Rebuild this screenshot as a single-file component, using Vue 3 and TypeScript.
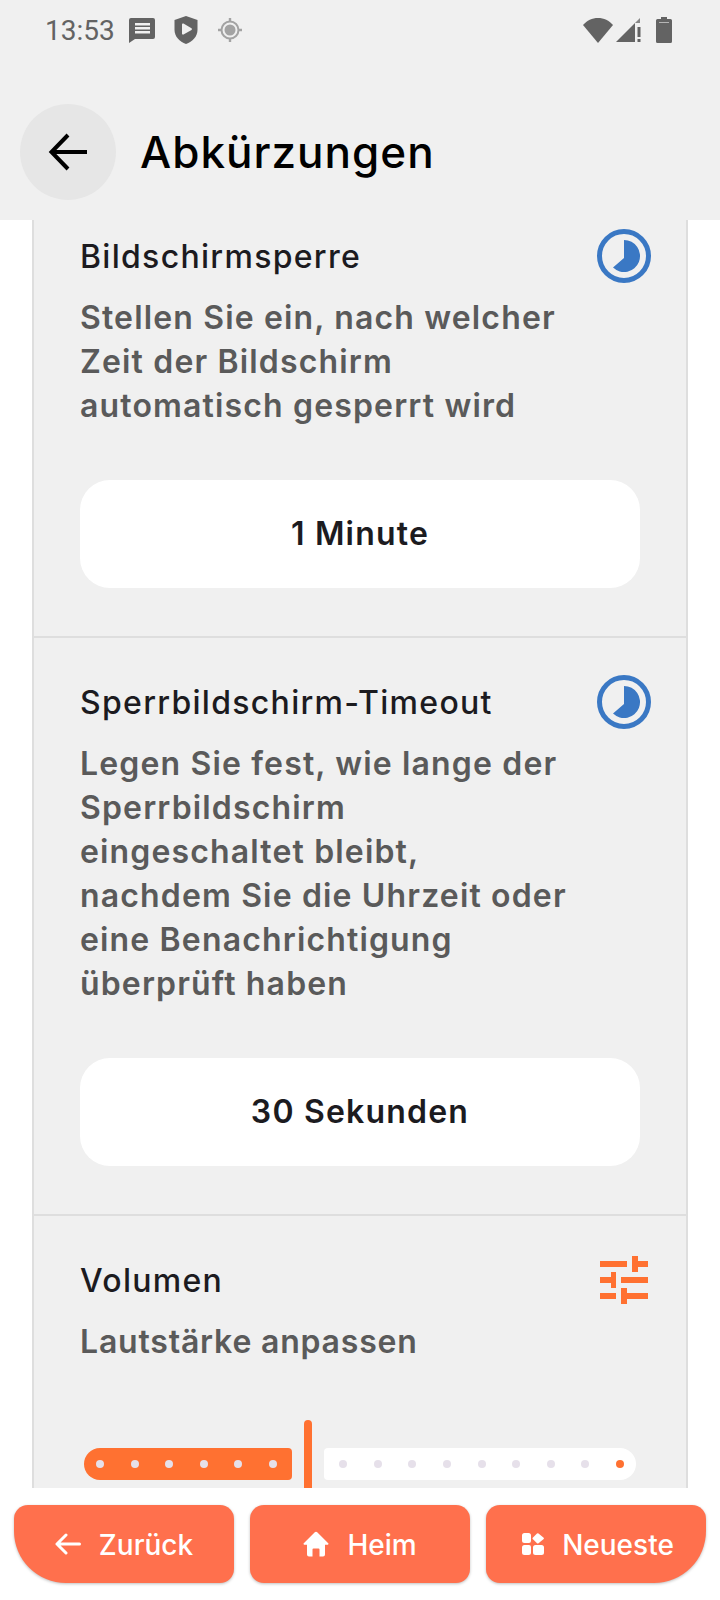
<script setup lang="ts">
interface Setting {
  title: string
  lines: string[]
  value: string
}

const timeouts: Setting[] = [
  {
    title: 'Bildschirmsperre',
    lines: ['Stellen Sie ein, nach welcher', 'Zeit der Bildschirm', 'automatisch gesperrt wird'],
    value: '1 Minute',
  },
  {
    title: 'Sperrbildschirm-Timeout',
    lines: [
      'Legen Sie fest, wie lange der',
      'Sperrbildschirm',
      'eingeschaltet bleibt,',
      'nachdem Sie die Uhrzeit oder',
      'eine Benachrichtigung',
      'überprüft haben',
    ],
    value: '30 Sekunden',
  },
]

const activeDots = 6
const idleDots = 9
</script>

<template>
  <div class="screen">
    <header class="top">
      <div class="status">
        <span class="time">13:53</span>
        <svg class="st-icon msg" viewBox="0 0 26 26">
          <path fill="#636363" d="M2 1h22a2 2 0 0 1 2 2v17a2 2 0 0 1-2 2H6l-6 4V3a2 2 0 0 1 2-2z" />
          <path fill="#f0f0f0" d="M6 6h15v2.400H6zM6 10h15v2.400H6zM6 14h15v2.400H6z" />
        </svg>
        <svg class="st-icon shield" viewBox="0 0 24 28">
          <path fill="#636363" d="M12 0l11.500 4v10c0 6.500-5 11.500-11.500 14C5.500 25.500.5 20.500.5 14V4z" />
          <path fill="#f0f0f0" d="M8 8.500c0-.8.8-1.300 1.500-.9l8 4.600c.6.400.6 1.300 0 1.700l-8 4.600c-.7.400-1.500-.1-1.500-.9z" />
        </svg>
        <svg class="st-icon gps" viewBox="0 0 24 24">
          <circle cx="12" cy="12" r="8.500" fill="none" stroke="#a3a3a3" stroke-width="2" />
          <circle cx="12" cy="12" r="5.500" fill="#a3a3a3" />
          <path stroke="#a3a3a3" stroke-width="2.400" d="M12 0v4M12 20v4M0 12h4M20 12h4" />
        </svg>
        <span class="status-gap"></span>
        <svg class="st-icon wifi" viewBox="0 0 30 26">
          <path fill="#636363" d="M15 26L0 8C4 3.500 9 1 15 1s11 2.500 15 7z" />
        </svg>
        <svg class="st-icon signal" viewBox="0 0 26 26">
          <path fill="#636363" d="M0 25L19 6v19z" />
          <path fill="#636363" d="M19 6l5-5v5z" opacity=".75" />
          <path fill="#636363" d="M21.500 10h3v10h-3zM21.500 22h3v3h-3z" />
        </svg>
        <svg class="st-icon battery" viewBox="0 0 16 26">
          <path fill="#636363" d="M5 0h6v2h3.500A1.500 1.500 0 0 1 16 3.500v21a1.500 1.500 0 0 1-1.500 1.500h-13A1.500 1.500 0 0 1 0 24.500v-21A1.500 1.500 0 0 1 1.500 2H5z" />
          <path fill="#b5b5b5" d="M3 5h10v1H3z" />
        </svg>
      </div>
      <div class="title-row">
        <button class="back" type="button">
          <svg viewBox="0 0 40 40" width="40" height="40">
            <path fill="none" stroke="#000" stroke-width="4" d="M39 20H4M20 3L3.500 20 20 37" />
          </svg>
        </button>
        <h1>Abkürzungen</h1>
      </div>
    </header>

    <main class="scroller">
      <div class="card">
        <section v-for="item in timeouts" :key="item.title" class="block">
          <div class="block-head">
            <h2>{{ item.title }}</h2>
            <svg class="clock" viewBox="0 0 54 54" width="54" height="54">
              <circle cx="27" cy="27" r="24.500" fill="none" stroke="#3a78c4" stroke-width="5" />
              <path fill="#3a78c4" d="M27 11a16 16 0 1 1-11 27.600L27 29z" />
            </svg>
          </div>
          <p class="desc">
            <template v-for="line in item.lines" :key="line">{{ line }}<br /></template>
          </p>
          <div class="value">{{ item.value }}</div>
        </section>

        <section class="block volume">
          <div class="block-head">
            <h2>Volumen</h2>
            <svg class="tune" viewBox="0 0 48 48" width="48" height="48">
              <path fill="#ff7131" d="M0 5h27v6H0zM32 0h6v16h-6zM38 5h10v6H38zM0 21h11v6H0zM11 16h5v16h-5zM21 21h27v6H21zM0 37h16v6H0zM21 32h6v16h-6zM27 37h21v6H27z" />
            </svg>
          </div>
          <p class="desc short">Lautstärke anpassen</p>
          <div class="slider">
            <div class="track on">
              <i v-for="n in activeDots" :key="n" class="dot"></i>
            </div>
            <span class="thumb"></span>
            <div class="track off">
              <i v-for="n in idleDots" :key="n" class="dot"></i>
            </div>
          </div>
        </section>
      </div>
    </main>

    <footer class="nav">
      <button class="nav-btn first" type="button">
        <svg viewBox="0 0 26 22" width="26" height="22">
          <path fill="none" stroke="#fff" stroke-width="3" stroke-linecap="round" stroke-linejoin="round" d="M24.500 11H2M11 2l-9 9 9 9" />
        </svg>
        <span class="label">Zurück</span>
      </button>
      <button class="nav-btn" type="button">
        <svg viewBox="0 0 26 26" width="26" height="26">
          <path fill="#fff" d="M11.500 1.500a2 2 0 0 1 3 0L25 12a1 1 0 0 1-.7 1.800H22v9.700a2 2 0 0 1-2 2h-3.500v-7a1 1 0 0 0-1-1h-5a1 1 0 0 0-1 1v7H6a2 2 0 0 1-2-2v-9.700H1.700A1 1 0 0 1 1 12z" />
        </svg>
        <span class="label">Heim</span>
      </button>
      <button class="nav-btn last" type="button">
        <svg viewBox="0 0 22 22" width="22" height="22">
          <path fill="#fff" d="M2.500 0h4A2.500 2.500 0 0 1 9 2.500V8a2 2 0 0 1-2 2H2.500A2.500 2.500 0 0 1 0 7.500v-5A2.500 2.500 0 0 1 2.500 0zM16.500.6l4.900 3.900a1.200 1.200 0 0 1 0 1.800l-4.900 3.900a1.200 1.200 0 0 1-1.500 0L11 6.300a1.200 1.200 0 0 1 0-1.800L15 .6a1.200 1.200 0 0 1 1.500 0zM2.500 12H7a2 2 0 0 1 2 2v5.500A2.500 2.500 0 0 1 6.500 22h-4A2.500 2.500 0 0 1 0 19.500v-5A2.500 2.500 0 0 1 2.500 12zM13.500 12h6a2.500 2.500 0 0 1 2.500 2.500v5a2.500 2.500 0 0 1-2.500 2.500h-6a2.500 2.500 0 0 1-2.500-2.500v-5a2.500 2.500 0 0 1 2.500-2.500z" />
        </svg>
        <span class="label">Neueste</span>
      </button>
    </footer>
  </div>
</template>

<style>
html,
body {
  margin: 0;
  background: #fff;
}
</style>

<style scoped>
.screen {
  width: 720px;
  height: 1600px;
  display: flex;
  flex-direction: column;
  overflow: hidden;
  background: #fff;
  font-family: 'Inter', 'Noto Sans', sans-serif;
}
.top {
  height: 220px;
  flex: none;
  background: #f0f0f0;
}
.status {
  height: 60px;
  display: flex;
  align-items: center;
  padding: 0 48px 0 45px;
  font-family: Roboto, sans-serif;
}
.time {
  font-size: 28px;
  color: #636363;
  margin-right: 14px;
}
.st-icon {
  display: block;
  flex: none;
}
.msg {
  width: 26px;
  height: 26px;
  margin-right: 19px;
}
.shield {
  width: 24px;
  height: 28px;
  margin-right: 20px;
}
.gps {
  width: 24px;
  height: 24px;
}
.status-gap {
  flex: 1;
}
.wifi {
  width: 30px;
  height: 26px;
  margin-right: 3px;
}
.signal {
  width: 26px;
  height: 26px;
  margin-right: 14px;
}
.battery {
  width: 16px;
  height: 26px;
}
.title-row {
  display: flex;
  align-items: center;
  margin-top: 44px;
  padding-left: 20px;
  gap: 24px;
}
.back {
  width: 96px;
  height: 96px;
  border: 0;
  padding: 0;
  border-radius: 50%;
  background: #e6e6e6;
  display: flex;
  align-items: center;
  justify-content: center;
}
h1 {
  margin: 0;
  font-size: 44px;
  font-weight: 500;
  letter-spacing: 1px;
  color: #000;
}
.scroller {
  height: 1268px;
  flex: none;
  overflow: hidden;
}
.card {
  margin: 0 32px;
  background: #f0f0f0;
  border-left: 2px solid #dedede;
  border-right: 2px solid #dedede;
}
.block {
  padding: 9px 46px 48px;
  border-bottom: 2px solid #dedede;
}
.block + .block {
  padding-top: 37px;
}
.block-head {
  display: flex;
  align-items: center;
  justify-content: space-between;
  height: 54px;
}
.clock {
  margin-right: -11px;
}
.tune {
  margin-right: -8px;
}
h2 {
  margin: 0;
  font-size: 32px;
  font-weight: 500;
  letter-spacing: 1.3px;
  color: #1c1b1f;
}
.desc {
  margin: 13px 0 0;
  font-size: 32px;
  line-height: 44px;
  font-weight: 600;
  letter-spacing: 1.15px;
  color: #5a5a5a;
}
.desc.short {
  letter-spacing: 0.8px;
}
.value {
  margin-top: 52px;
  height: 108px;
  padding-bottom: 2px;
  box-sizing: border-box;
  border-radius: 30px;
  background: #fff;
  display: flex;
  align-items: center;
  justify-content: center;
  font-size: 32px;
  font-weight: 600;
  letter-spacing: 1.2px;
  color: #1c1b1f;
}
.volume {
  padding-bottom: 0;
  border-bottom: 0;
}
.slider {
  margin-top: 56px;
  display: flex;
  align-items: center;
  height: 88px;
  padding-left: 4px;
}
.track {
  height: 32px;
  display: flex;
  align-items: center;
  justify-content: space-between;
  box-sizing: border-box;
}
.track.on {
  width: 208px;
  padding: 0 15px 0 12px;
  background: #ff7131;
  border-radius: 16px 4px 4px 16px;
}
.track.off {
  width: 312px;
  padding: 0 12px 0 15px;
  background: #fff;
  border-radius: 4px 16px 16px 4px;
}
.dot {
  width: 8px;
  height: 8px;
  border-radius: 50%;
  background: #e6e0ea;
}
.track.off .dot:last-child {
  background: #ff7131;
}
.thumb {
  width: 8px;
  height: 88px;
  margin: 0 12px;
  border-radius: 4px;
  background: #ff7131;
}
.nav {
  flex: 1;
  display: flex;
  gap: 16px;
  padding: 17px 14px 17px;
  box-sizing: border-box;
}
.nav-btn {
  flex: none;
  width: 220px;
  box-sizing: border-box;
  border: 0;
  padding: 0;
  border-radius: 14px;
  background: #ff704d;
  box-shadow: 0 1px 3px rgba(0, 0, 0, 0.25);
  color: #fff;
  display: flex;
  align-items: center;
  justify-content: center;
  gap: 18px;
  font-family: Inter, sans-serif;
  font-size: 28px;
  font-weight: 500;
}
.label {
  margin-top: 2px;
}
.first {
  border-bottom-left-radius: 52px;
}
.last {
  padding-left: 4px;
  border-bottom-right-radius: 52px;
}
</style>
